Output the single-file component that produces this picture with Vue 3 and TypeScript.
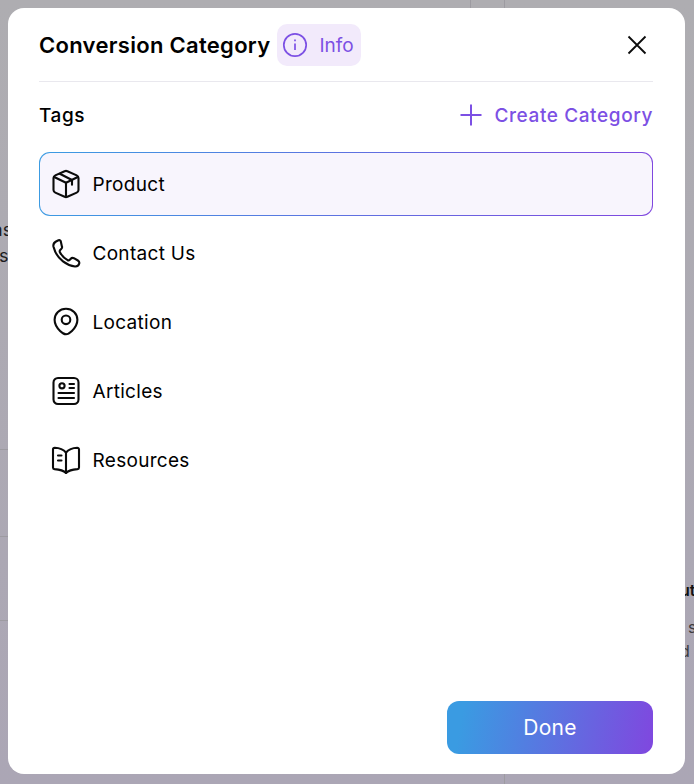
<script setup lang="ts">
const items = [
  { name: 'Product', icon: 'box', active: true },
  { name: 'Contact Us', icon: 'phone', active: false },
  { name: 'Location', icon: 'pin', active: false },
  { name: 'Articles', icon: 'article', active: false },
  { name: 'Resources', icon: 'book', active: false },
]
</script>

<template>
  <div class="page">
    <div class="behind" aria-hidden="true">
      <span class="vline v1"></span>
      <span class="vline v2"></span>
      <span class="vline v3"></span>
      <span class="hline h1"></span>
      <span class="hline h2"></span>
      <span class="hline h3"></span>
      <span class="bgt l1">ns</span>
      <span class="bgt l2">s</span>
      <span class="bgt r1">ut</span>
      <span class="bgt r2">s</span>
      <span class="bgt r3">d</span>
    </div>
    <section class="modal">
      <header class="head">
        <div class="head-left">
          <h1>Conversion Category</h1>
          <div class="info">
            <svg width="26" height="26" viewBox="0 0 26 26" fill="none" stroke="#7c50e4" stroke-width="1.7">
              <circle cx="13" cy="13" r="11.2" />
              <path d="M13 11.5v6.500" />
              <path d="M13 7.600v1.600" />
            </svg>
            <span>Info</span>
          </div>
        </div>
        <svg class="close" width="20" height="20" viewBox="0 0 20 20" fill="none" stroke="#0b0b0b" stroke-width="1.8">
          <path d="M1.500 1.500l17 17M18.500 1.500l-17 17" />
        </svg>
      </header>
      <div class="tags-row">
        <span class="tags">Tags</span>
        <div class="create">
          <svg width="24" height="24" viewBox="0 0 24 24" fill="none" stroke="#7c50e4" stroke-width="2">
            <path d="M12 1.500v21M1.500 12h21" />
          </svg>
          <span>Create Category</span>
        </div>
      </div>
      <ul class="list">
        <li v-for="item in items" :key="item.name" class="row" :class="{ active: item.active }">
          <svg class="ico" width="30" height="30" viewBox="0 0 30 30" fill="none" stroke="#0b0b0b" stroke-width="2.1" stroke-linecap="round" stroke-linejoin="round">
            <template v-if="item.icon === 'box'">
              <path d="M13.600 2.200a3.400 3.400 0 0 1 2.800 0l9.300 4.200a3 3 0 0 1 1.800 2.700v11.800a3 3 0 0 1-1.800 2.700l-9.300 4.200a3.400 3.400 0 0 1-2.800 0l-9.300-4.200a3 3 0 0 1-1.800-2.700V9.100a3 3 0 0 1 1.800-2.700z" />
              <path d="M3.200 8L15 13.800 26.800 8" />
              <path d="M15 13.800V27.900" />
              <path d="M8.800 4.800l12.200 6.200v4.800" />
            </template>
            <template v-else-if="item.icon === 'phone'">
              <path d="M7.500 2.300L5 3.500C3.200 4.500 2 6.500 2.500 8.800c1.500 6 4.800 11 9.500 14.500 3.300 2.500 7.500 4.700 12 5.200 2.300.1 3.900-1.300 4.300-3.200.2-1.300-.4-2.200-1.400-2.800l-4-2.300c-1.200-.6-2.300-.4-3.100.5l-1 1.100c-.6.700-1.400.8-2.200.4-3.300-1.900-6-4.700-7.700-8-.4-.8-.3-1.500.3-2.200l1-1c.9-.8 1.100-1.900.6-3L9.700 3.100c-.5-.9-1.300-1.200-2.200-.8z" />
            </template>
            <template v-else-if="item.icon === 'pin'">
              <path d="M15 1.800c6.400 0 11.400 4.800 11.400 10.900 0 4.300-2.200 8-5.500 11.200-2 1.900-3.800 3.300-5.900 3.300s-4-1.400-5.900-3.300c-3.300-3.200-5.500-6.900-5.500-11.200C3.600 6.600 8.600 1.800 15 1.800z" />
              <circle cx="15" cy="12.800" r="4.300" />
            </template>
            <template v-else-if="item.icon === 'article'">
              <rect x="2.500" y="2" width="25" height="26" rx="4.500" />
              <circle cx="11" cy="9.800" r="2.600" />
              <path d="M18.500 8h4.500M18.500 12h4.500M7.500 17h15.500M7.500 22h15.500" />
            </template>
            <template v-else>
              <path d="M15 7.500C12.500 4.500 8 2.800 3.800 2.700c-1 0-1.800.7-1.800 1.700v18c0 .9.700 1.600 1.600 1.700C8 24.400 12.500 25.500 15 28c2.500-2.500 7-3.600 11.400-3.900.9-.1 1.600-.8 1.600-1.700v-18c0-1-.8-1.700-1.800-1.700C22 2.800 17.500 4.500 15 7.500z" />
              <path d="M15 7.500V28" />
              <path d="M7 10.500h3.500M7 15.500h3.500" />
            </template>
          </svg>
          <span>{{ item.name }}</span>
        </li>
      </ul>
      <footer class="foot">
        <button class="done" type="button">Done</button>
      </footer>
    </section>
  </div>
</template>

<style>
html, body { margin: 0; padding: 0; }
</style>

<style scoped>
.page {
  position: relative;
  width: 694px;
  height: 784px;
  box-sizing: border-box;
  padding: 8px 9px 10px 8px;
  background: linear-gradient(#aeadb1, #aba6b5);
  overflow: hidden;
  font-family: Inter, "Liberation Sans", sans-serif;
}
.behind { position: absolute; inset: 0; }
.vline { position: absolute; width: 1px; background: #9d9ba1; }
.v1 { left: 470px; top: 0; height: 8px; }
.v2 { left: 504px; top: 0; height: 8px; }
.v3 { left: 504px; top: 774px; height: 10px; }
.hline { position: absolute; left: 0; width: 8px; height: 1px; background: #9d9ba1; }
.h1 { top: 449px; }
.h2 { top: 536px; }
.h3 { top: 620px; }
.bgt { position: absolute; font-size: 16px; line-height: 20px; color: #3d3c40; white-space: nowrap; }
.l1 { left: -8px; top: 220px; font-size: 18px; color: #1c1c20; }
.l2 { left: -1px; top: 246px; font-size: 18px; color: #1c1c20; }
.r1 { left: 680px; top: 580px; font-weight: 600; color: #111; }
.r2 { left: 688px; top: 617px; }
.r3 { left: 680px; top: 641px; }
.modal {
  position: relative;
  height: 766px;
  box-sizing: border-box;
  padding: 16px 32px 20px 31px;
  background: #fff;
  border-radius: 16px;
  display: flex;
  flex-direction: column;
}
.head {
  display: flex;
  align-items: center;
  justify-content: space-between;
  height: 42px;
  padding-bottom: 15px;
  border-bottom: 1px solid #e9e8ee;
}
.head-left { display: flex; align-items: center; gap: 7px; }
h1 { margin: 0; font-size: 22px; font-weight: 600; color: #000; line-height: 44px; letter-spacing: 0.3px; }
.info {
  display: flex;
  align-items: center;
  gap: 11px;
  height: 42px;
  padding: 0 7px 0 5px;
  background: #f2eafb;
  border-radius: 10px;
  color: #7c50e4;
  font-size: 19px;
}
.close { margin-right: 6px; }
.tags-row {
  display: flex;
  align-items: center;
  justify-content: space-between;
  margin-top: 20px;
  height: 26px;
}
.tags { font-size: 19px; font-weight: 500; color: #000; letter-spacing: 0.6px; }
.create { display: flex; align-items: center; gap: 11px; color: #7c50e4; font-size: 19px; font-weight: 500; letter-spacing: 0.6px; }
.list { list-style: none; margin: 24px 0 0; padding: 0; display: flex; flex-direction: column; gap: 5.1px; }
.row {
  display: flex;
  align-items: center;
  gap: 11.5px;
  height: 64px;
  padding: 0 12px 0 11px;
  box-sizing: border-box;
  border: 1px solid transparent;
  border-radius: 11px;
  font-size: 19px;
  letter-spacing: 0.3px;
  color: #000;
}
.row.active {
  background: linear-gradient(#f8f5fd, #f8f5fd) padding-box, linear-gradient(100deg, #3b9ce2, #8047df) border-box;
}
.foot { margin-top: auto; display: flex; justify-content: flex-end; }
.done {
  width: 206px;
  height: 53px;
  border: 0;
  border-radius: 12px;
  background: linear-gradient(100deg, #3a9be2 8%, #8047df 100%);
  color: #fff;
  font-family: inherit;
  font-size: 21px;
  letter-spacing: 0.3px;
}
</style>
